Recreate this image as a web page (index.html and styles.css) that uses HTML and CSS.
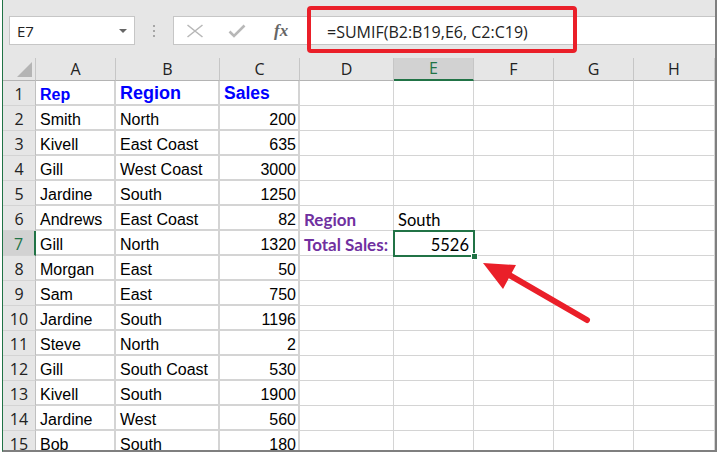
FILE: index.html
```html
<!DOCTYPE html>
<html>
<head>
<meta charset="utf-8">
<link rel="stylesheet" href="styles.css">
</head>
<body>
<div class="frame">
  <div class="toolbar">
    <div class="namebox"><span class="ref">E7</span><span class="dd"></span></div>
    <div class="grip"><i></i><i></i><i></i></div>
    <div class="fxbox">
      <svg class="ico" width="18" height="14" viewBox="0 0 18 14"><path d="M1.5 1 L16.5 13 M16.5 1 L1.5 13" stroke="#b8b8b8" stroke-width="1.6" fill="none"/></svg>
      <svg class="ico" width="18" height="14" viewBox="0 0 18 14"><path d="M1.5 7.5 L6 12 L16.5 1.5" stroke="#b8b8b8" stroke-width="2.6" fill="none"/></svg>
      <span class="fx">fx</span>
    </div>
    <div class="input">=SUMIF(B2:B19,E6, C2:C19)</div>
  </div>
  <div class="sheet">
    <div class="corner"><span class="tri"></span></div>
    <div class="ch">A</div><div class="ch">B</div><div class="ch">C</div><div class="ch">D</div><div class="ch ch-sel">E</div><div class="ch">F</div><div class="ch">G</div><div class="ch">H</div>

    <div class="rh">1</div><div class="t hd hd-rep">Rep</div><div class="t hd hd-region">Region</div><div class="t hd hd-sales">Sales</div><div class="c"></div><div class="c"></div><div class="c"></div><div class="c"></div><div class="c"></div>
    <div class="rh">2</div><div class="t">Smith</div><div class="t">North</div><div class="t num">200</div><div class="c"></div><div class="c"></div><div class="c"></div><div class="c"></div><div class="c"></div>
    <div class="rh">3</div><div class="t">Kivell</div><div class="t">East Coast</div><div class="t num">635</div><div class="c"></div><div class="c"></div><div class="c"></div><div class="c"></div><div class="c"></div>
    <div class="rh">4</div><div class="t">Gill</div><div class="t">West Coast</div><div class="t num">3000</div><div class="c"></div><div class="c"></div><div class="c"></div><div class="c"></div><div class="c"></div>
    <div class="rh">5</div><div class="t">Jardine</div><div class="t">South</div><div class="t num">1250</div><div class="c"></div><div class="c"></div><div class="c"></div><div class="c"></div><div class="c"></div>
    <div class="rh">6</div><div class="t">Andrews</div><div class="t">East Coast</div><div class="t num">82</div><div class="c lbl">Region</div><div class="c cal">South</div><div class="c"></div><div class="c"></div><div class="c"></div>
    <div class="rh rh-sel">7</div><div class="t">Gill</div><div class="t">North</div><div class="t num">1320</div><div class="c lbl">Total Sales:</div><div class="c cal num sel">5526<span class="handle"></span></div><div class="c"></div><div class="c"></div><div class="c"></div>
    <div class="rh">8</div><div class="t">Morgan</div><div class="t">East</div><div class="t num">50</div><div class="c"></div><div class="c"></div><div class="c"></div><div class="c"></div><div class="c"></div>
    <div class="rh">9</div><div class="t">Sam</div><div class="t">East</div><div class="t num">750</div><div class="c"></div><div class="c"></div><div class="c"></div><div class="c"></div><div class="c"></div>
    <div class="rh">10</div><div class="t">Jardine</div><div class="t">South</div><div class="t num">1196</div><div class="c"></div><div class="c"></div><div class="c"></div><div class="c"></div><div class="c"></div>
    <div class="rh">11</div><div class="t">Steve</div><div class="t">North</div><div class="t num">2</div><div class="c"></div><div class="c"></div><div class="c"></div><div class="c"></div><div class="c"></div>
    <div class="rh">12</div><div class="t">Gill</div><div class="t">South Coast</div><div class="t num">530</div><div class="c"></div><div class="c"></div><div class="c"></div><div class="c"></div><div class="c"></div>
    <div class="rh">13</div><div class="t">Kivell</div><div class="t">South</div><div class="t num">1900</div><div class="c"></div><div class="c"></div><div class="c"></div><div class="c"></div><div class="c"></div>
    <div class="rh">14</div><div class="t">Jardine</div><div class="t">West</div><div class="t num">560</div><div class="c"></div><div class="c"></div><div class="c"></div><div class="c"></div><div class="c"></div>
    <div class="rh">15</div><div class="t">Bob</div><div class="t">South</div><div class="t num">180</div><div class="c"></div><div class="c"></div><div class="c"></div><div class="c"></div><div class="c"></div>
  </div>
</div>
<div class="redbox"></div>
<svg class="arrow" width="717" height="452" viewBox="0 0 717 452">
  <line x1="587" y1="320" x2="506" y2="273" stroke="#ea1f29" stroke-width="6" stroke-linecap="round"/>
  <polygon points="483,263 516,265 503,289" fill="#ea1f29"/>
</svg>
</body>
</html>
```

FILE: styles.css
```css
html, body {
  margin: 0;
  padding: 0;
  background: #ffffff;
}
body {
  width: 717px;
  height: 452px;
  overflow: hidden;
}
.frame {
  margin-left: 2px;
  width: 715px;
  height: 452px;
  box-sizing: border-box;
  border-left: 1px solid #217346;
  border-right: 2px solid #7f7f7f;
  border-bottom: 2px solid #7f7f7f;
  background: #e6e6e6;
  overflow: hidden;
}
.toolbar {
  height: 58px;
  box-sizing: border-box;
  padding-top: 16px;
  display: flex;
  align-items: flex-start;
}
.namebox {
  margin-left: 6px;
  width: 126px;
  height: 29px;
  box-sizing: border-box;
  background: #fff;
  border: 1px solid #c6c6c6;
  display: flex;
  align-items: center;
  justify-content: space-between;
  padding: 0 7px;
  font-family: "Open Sans", sans-serif;
  font-size: 15px;
  color: #222;
}
.dd {
  width: 0;
  height: 0;
  border-left: 4px solid transparent;
  border-right: 4px solid transparent;
  border-top: 4px solid #666;
}
.grip {
  width: 38px;
  height: 29px;
  display: flex;
  flex-direction: column;
  align-items: center;
  justify-content: center;
  gap: 3px;
}
.grip i {
  display: block;
  width: 2px;
  height: 2px;
  background: #a6a6a6;
}
.fxbox {
  width: 134px;
  height: 29px;
  box-sizing: border-box;
  background: #fff;
  border: 1px solid #c6c6c6;
  border-right: none;
  display: flex;
  align-items: center;
  padding-left: 12px;
  gap: 24px;
}
.ico {
  display: block;
}
.fx {
  font-family: "Liberation Serif", serif;
  font-style: italic;
  font-weight: bold;
  font-size: 17px;
  color: #666;
  margin-left: 4px;
}
.input {
  flex: 1;
  height: 29px;
  box-sizing: border-box;
  background: #fff;
  border-top: 1px solid #c6c6c6;
  border-bottom: 1px solid #c6c6c6;
  padding-left: 20px;
  font-family: "Open Sans", sans-serif;
  font-size: 16px;
  line-height: 30px;
  color: #222;
}
.sheet {
  display: grid;
  grid-template-columns: 33px 80px 104px 80px 94px 80px 80px 80px 81px;
  grid-template-rows: 23px repeat(15, 25px);
  background: #fff;
}
.corner {
  background: #e6e6e6;
  border-right: 1px solid #c6c6c6;
  border-bottom: 1px solid #b4b4b4;
  position: relative;
}
.tri {
  position: absolute;
  right: 3px;
  bottom: 3px;
  width: 0;
  height: 0;
  border-left: 15px solid transparent;
  border-bottom: 15px solid #b4b4b4;
}
.ch {
  background: #e6e6e6;
  border-right: 1px solid #c6c6c6;
  border-bottom: 1px solid #b4b4b4;
  font-family: "Open Sans", sans-serif;
  font-size: 16px;
  color: #222;
  text-align: center;
  line-height: 22px;
}
.ch-sel {
  background: #d2d2d2;
  border-bottom: 2px solid #217346;
  color: #217346;
  line-height: 21px;
}
.rh {
  background: #e6e6e6;
  border-right: 1px solid #c0c0c0;
  border-bottom: 1px solid #d4d4d4;
  font-family: "Open Sans", sans-serif;
  font-size: 16px;
  color: #222;
  text-align: center;
  line-height: 27px;
}
.rh-sel {
  background: #d2d2d2;
  border-right: 2px solid #217346;
  color: #217346;
}
.t, .c {
  box-sizing: border-box;
  font-family: "Liberation Sans", Arial, sans-serif;
  font-size: 16px;
  color: #000;
  padding: 0 4px;
  line-height: 18px;
  display: flex;
  align-items: flex-end;
  white-space: nowrap;
}
.t {
  border-right: 2px solid #d4d4d4;
  border-bottom: 2px solid #d4d4d4;
  padding-bottom: 0;
}
.c {
  border-right: 1px solid #d4d4d4;
  border-bottom: 1px solid #d4d4d4;
  padding-bottom: 1px;
}
.num {
  justify-content: flex-end;
  padding-right: 2px;
}
.hd {
  color: #0000ff;
  font-weight: bold;
}
.hd-rep {
  font-size: 16px;
  padding-bottom: 0;
}
.hd-region {
  font-size: 18px;
  padding-bottom: 2px;
}
.hd-sales {
  font-size: 17.5px;
  padding-bottom: 2px;
}
.lbl {
  font-family: Lato, "Open Sans", sans-serif;
  font-weight: bold;
  font-size: 17px;
  color: #7030a0;
  padding-left: 4px;
}
.cal {
  font-family: Lato, "Open Sans", sans-serif;
  font-size: 16.5px;
  color: #000;
}
.sel {
  position: relative;
  padding-right: 4px;
}
.sel::after {
  content: "";
  position: absolute;
  left: -1px;
  top: -1px;
  width: 82px;
  height: 27px;
  box-sizing: border-box;
  border: 2px solid #217346;
}
.handle {
  position: absolute;
  left: 77px;
  top: 22px;
  width: 7px;
  height: 7px;
  box-sizing: border-box;
  background: #217346;
  border: 1px solid #fff;
  z-index: 2;
}
.redbox {
  position: absolute;
  left: 307px;
  top: 6px;
  width: 270px;
  height: 47px;
  box-sizing: border-box;
  border: 4px solid #ea1f29;
  border-radius: 4px;
}
.arrow {
  position: absolute;
  left: 0;
  top: 0;
  pointer-events: none;
}
```
